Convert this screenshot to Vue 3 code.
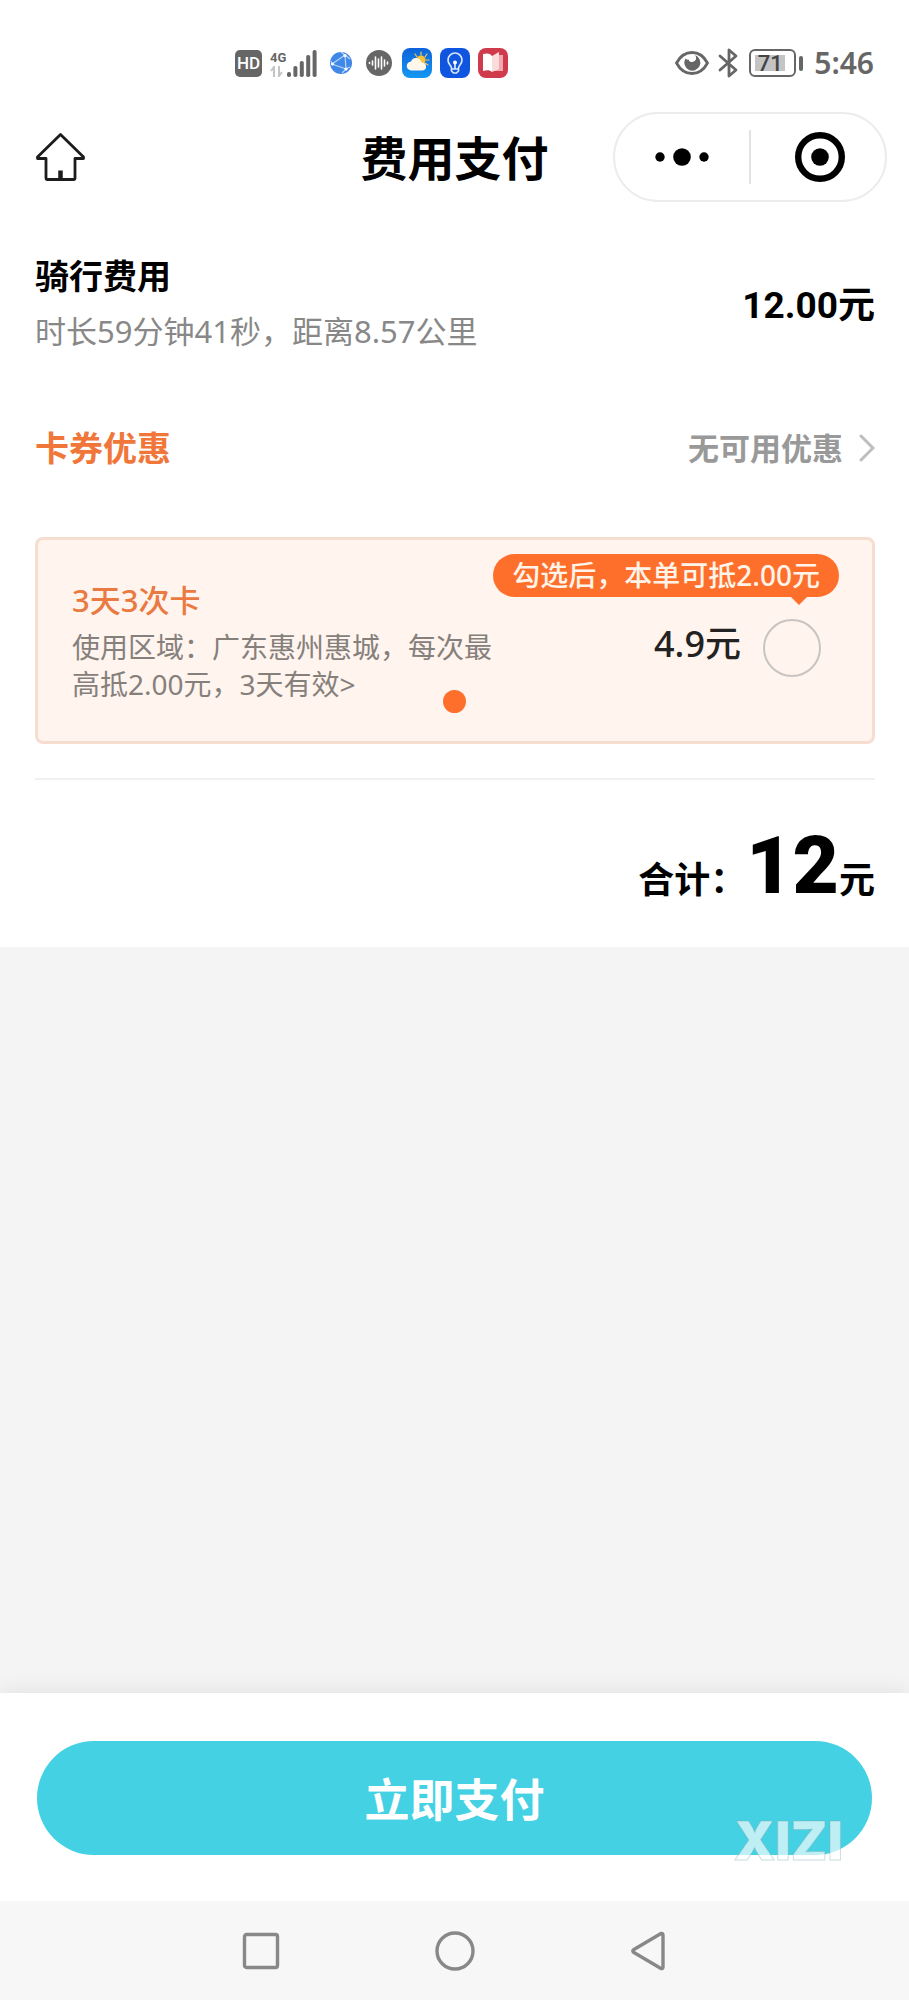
<script setup>
import { ref } from 'vue'

const cardSelected = ref(false)
const bars = [5, 11, 16, 22, 27]
</script>

<template>
  <div class="page">
    <div class="status">
      <div class="status-left">
        <span class="hd">HD</span>
        <span class="signal">
          <span class="net">
            <span class="net-name">4G</span>
            <svg width="13" height="11" viewBox="0 0 13 11" fill="none" stroke="#c4c4c4" stroke-width="2">
              <path d="M4 11V1L1 5M9 0v10l3-4" />
            </svg>
          </span>
          <svg width="30" height="28" viewBox="0 0 30 28" fill="#666">
            <rect v-for="(h, i) in bars" :key="i" :x="i * 6.4" :y="28 - h" width="4" :height="h" rx="1.8" />
          </svg>
        </span>
        <svg class="globe" width="22" height="22" viewBox="0 0 22 22">
          <circle cx="11" cy="11" r="11" fill="#4087e6" />
          <g fill="none" stroke="#b9d6fa" stroke-width="1.2">
            <path d="M2 12 15 3l1 14z" />
            <path d="M15 3l5 4M2 12l-1 -3M16 17l-4 4M15 3l-4-3M16 17l4-2" />
          </g>
          <g fill="#fff"><circle cx="2.5" cy="12" r="1.5" /><circle cx="15" cy="3.5" r="1.6" /><circle cx="16" cy="17" r="1.6" /></g>
        </svg>
        <svg class="wave" width="26" height="26" viewBox="0 0 26 26">
          <circle cx="13" cy="13" r="13" fill="#666" />
          <path d="M3.500 12.500v1M6.500 11v4M9.500 7v12M12.500 9v8M15.500 7v12M18.500 10v6M21.500 12v2" stroke="#fff" stroke-width="1.600" stroke-linecap="round" />
        </svg>
        <svg width="30" height="30" viewBox="0 0 30 30">
          <defs>
            <linearGradient id="sky" x1="0" y1="0" x2="0" y2="1"><stop offset="0" stop-color="#0c62da" /><stop offset="1" stop-color="#1499f4" /></linearGradient>
          </defs>
          <rect width="30" height="30" rx="8" fill="url(#sky)" />
          <path d="M19 4v3M13 6l2 3M25 6l-2 3M24 12h3M23 15l3 2" stroke="#f6c552" stroke-width="1.2" stroke-linecap="round" />
          <circle cx="19" cy="12" r="4.500" fill="#fbc137" />
          <path d="M9.500 22.500a4.500 4.500 0 0 1-.5-9 5.500 5.500 0 0 1 10.500 1 4 4 0 0 1 1 8z" fill="#fff8ea" />
        </svg>
        <svg width="30" height="30" viewBox="0 0 30 30">
          <rect width="30" height="30" rx="8" fill="#0f55e0" />
          <g fill="none" stroke="#d8e6ff" stroke-width="1.7" stroke-linecap="round">
            <path d="M11.500 20c0-2.500-3.500-3.500-3.500-8a7 7 0 0 1 14 0c0 4.500-3.500 5.500-3.500 8v3l-2 2h-3l-2-2z" />
            <path d="M15 15v6M12 21h6" />
          </g>
          <circle cx="15" cy="14.500" r="2" fill="#fff" />
        </svg>
        <svg width="30" height="30" viewBox="0 0 30 30">
          <rect width="30" height="30" rx="8" fill="#cf3a4c" />
          <path d="M17 7h8v16h-9z" fill="#f2a9ae" />
          <path d="M5 6c4-1 7-1 9 2v16c-2-2-5-2-9-1z" fill="#fff" />
          <path d="M14 8l7-4v17l-7 3z" fill="#fbdcdc" />
        </svg>
      </div>
      <div class="status-right">
        <svg width="34" height="24" viewBox="0 0 34 24">
          <path d="M1.500 12C9-2 25-2 32.500 12 25 26 9 26 1.500 12z" fill="none" stroke="#666" stroke-width="2.800" stroke-linejoin="round" />
          <path d="M10.500 7.500a8 8 0 1 0 9.500-3.400c2.500 3.400.5 6.900-3 6.900-1.800 0-3-1-3.500-2.600-1 .6-2 .1-3-.9z" fill="#666" />
        </svg>
        <svg class="bt" width="20" height="30" viewBox="0 0 20 30" fill="none" stroke="#666" stroke-width="2.800" stroke-linejoin="round" stroke-linecap="round">
          <path d="M2 8l16 14-7 6V2l7 6L2 22" />
        </svg>
        <span class="battery"><span class="level">71</span></span>
        <span class="battery-tip"></span>
        <time class="clock">5:46</time>
      </div>
    </div>

    <header class="nav">
      <button class="icon-button home" type="button" aria-label="首页">
        <svg width="49" height="48" viewBox="0 0 49 48" fill="none" stroke="#1c1c1c" stroke-width="2.800" stroke-linejoin="round">
          <path d="M24.500 1.500 47.500 24v1.500H39V45.500q0 1-1 1H11q-1 0-1-1V25.500H1.500V24z" />
          <path d="M24.500 37.500v9" stroke-width="4.500" />
        </svg>
      </button>
      <h1>费用支付</h1>
      <div class="capsule">
        <button class="icon-button" type="button" aria-label="更多">
          <svg width="54" height="18" viewBox="0 0 54 18"><circle cx="5" cy="9" r="4.700" /><circle cx="27" cy="9" r="8.800" /><circle cx="49" cy="9" r="4.700" /></svg>
        </button>
        <span class="split"></span>
        <button class="icon-button" type="button" aria-label="关闭">
          <svg width="50" height="50" viewBox="0 0 50 50"><circle cx="25" cy="25" r="21.800" fill="none" stroke="#000" stroke-width="6.400" /><circle cx="25" cy="25" r="8.800" /></svg>
        </button>
      </div>
    </header>

    <main class="bill">
      <section class="row">
        <div>
          <h2>骑行费用</h2>
          <p class="trip">时长59分钟41秒，距离8.57公里</p>
        </div>
        <strong class="price">12.00元</strong>
      </section>

      <section class="row discount">
        <h2 class="accent">卡券优惠</h2>
        <a class="more" href="#">
          无可用优惠
          <svg width="16" height="28" viewBox="0 0 16 28" fill="none" stroke="#bdbdbd" stroke-width="3" stroke-linecap="round"><path d="M2 2l12 12L2 26" /></svg>
        </a>
      </section>

      <section class="card">
        <div class="card-info">
          <h3>3天3次卡</h3>
          <p>使用区域：广东惠州惠城，每次最高抵2.00元，3天有效&gt;</p>
        </div>
        <label class="pick">
          <span class="pick-price">4.9元</span>
          <input v-model="cardSelected" type="checkbox" aria-label="3天3次卡" />
        </label>
        <span class="tip">勾选后，本单可抵2.00元</span>
        <span class="dot"></span>
      </section>

      <section class="total">
        <span>合计：</span><strong>12</strong><span>元</span>
      </section>
    </main>

    <div class="blank"></div>

    <footer class="pay">
      <button class="pay-button" type="button">立即支付</button>
      <span class="mark">XIZI</span>
    </footer>

    <nav class="system">
      <button class="icon-button" type="button" aria-label="最近任务">
        <svg width="40" height="40" viewBox="0 0 40 40"><rect x="3.500" y="3.500" width="33" height="33" rx="2" /></svg>
      </button>
      <button class="icon-button" type="button" aria-label="主屏幕">
        <svg width="40" height="40" viewBox="0 0 40 40"><circle cx="20" cy="20" r="18" /></svg>
      </button>
      <button class="icon-button" type="button" aria-label="返回">
        <svg width="40" height="40" viewBox="0 0 40 40"><path d="M4.500 18.700 32 2.500q2-.5 2 1.500v32q0 2-2 1.500L4.500 21.300q-1.500-1.300 0-2.600z" /></svg>
      </button>
    </nav>
  </div>
</template>

<style>
body {
  margin: 0;
}
</style>

<style scoped>
.page {
  display: flex;
  flex-direction: column;
  min-height: 100vh;
  background: #fff;
  color: #000;
  font-family: "Noto Sans", "Noto Sans CJK SC", sans-serif;
}
h1, h2, h3, p {
  margin: 0;
}
svg {
  display: block;
  flex: none;
}
button {
  font: inherit;
  border: 0;
  cursor: pointer;
}
.icon-button {
  display: flex;
  padding: 0;
  background: none;
}

.status {
  display: flex;
  justify-content: space-between;
  align-items: center;
  height: 74px;
  padding: 26px 35px 0 235px;
  color: #666;
}
.status-left,
.status-right {
  display: flex;
  align-items: center;
}
.status-left {
  gap: 8px;
}
.hd {
  width: 27px;
  border-radius: 5px;
  background: #666;
  color: #fff;
  font: 500 17px/27px Roboto, sans-serif;
  text-align: center;
}
.signal {
  display: flex;
  align-items: flex-end;
}
.net {
  width: 17px;
}
.net-name {
  display: block;
  font: 700 13px/16px Roboto, sans-serif;
}
.globe {
  margin: 0 6px 0 5px;
}
.wave {
  margin-right: 2px;
}
.bt {
  margin-left: 9px;
}
.battery {
  box-sizing: border-box;
  width: 47px;
  height: 28px;
  margin-left: 11px;
  padding: 4px;
  border: 2px solid #666;
  border-radius: 6px;
}
.level {
  display: block;
  width: 30px;
  height: 16px;
  background: #c4c4c4;
  color: #444;
  font: 500 22px/18px Roboto, sans-serif;
  text-align: center;
}
.battery-tip {
  width: 4px;
  height: 15px;
  margin-left: 3px;
  border-radius: 2px;
  background: #666;
}
.clock {
  margin-left: 11px;
  font: 600 30px/36px "Noto Sans", sans-serif;
}

.nav {
  display: grid;
  grid-template-columns: 1fr auto 1fr;
  align-items: center;
  height: 114px;
  padding: 0 22px;
}
.home {
  margin-left: 14px;
}
h1 {
  padding-top: 2px;
  font-size: 47px;
  line-height: 60px;
  font-weight: 700;
}
.capsule {
  box-sizing: border-box;
  display: flex;
  align-items: center;
  justify-self: end;
  height: 90px;
  padding: 0 40px;
  border: 2px solid #ececec;
  border-radius: 45px;
}
.split {
  width: 2px;
  height: 54px;
  margin: 0 44px 0 40px;
  background: #e2e2e2;
}

.bill {
  padding: 39px 34px 19px 35px;
}
.row {
  display: flex;
  justify-content: space-between;
  align-items: center;
}
h2 {
  font-size: 34px;
  line-height: 46px;
  font-weight: 700;
}
.trip {
  margin-top: 10px;
  color: #888;
  font-size: 31px;
  line-height: 44px;
}
.price {
  padding-top: 6px;
  font-family: Roboto, "Noto Sans CJK SC", sans-serif;
  font-size: 37px;
  line-height: 46px;
}
.discount {
  margin-top: 72px;
}
.accent {
  color: #f0763a;
}
.more {
  display: flex;
  align-items: center;
  gap: 16px;
  color: #999;
  font-size: 31px;
  line-height: 44px;
  font-weight: 700;
  text-decoration: none;
}
.card {
  position: relative;
  box-sizing: border-box;
  display: flex;
  justify-content: space-between;
  align-items: center;
  height: 207px;
  margin-top: 66px;
  padding: 0 51px 0 34px;
  border: 3px solid #f6ddcf;
  border-radius: 8px;
  background: #fff4ee;
}
.card-info {
  max-width: 428px;
}
h3 {
  color: #ea7a42;
  font-size: 31px;
  line-height: 42px;
  font-weight: 500;
}
.card-info p {
  margin-top: 8px;
  color: #85807c;
  font-size: 28px;
  line-height: 37px;
}
.pick {
  display: flex;
  align-items: center;
  gap: 22px;
  margin-top: 14px;
  color: #222;
  font-size: 36px;
  line-height: 46px;
  font-weight: 500;
}
.pick-price {
  padding-bottom: 8px;
}
.pick input {
  appearance: none;
  box-sizing: border-box;
  width: 58px;
  height: 58px;
  margin: 0;
  border: 2px solid #c8c4c2;
  border-radius: 50%;
}
.pick input:checked {
  border: 16px solid #ff6f2c;
}
.tip {
  position: absolute;
  top: 14px;
  right: 33px;
  padding: 0 19px;
  border-radius: 22px;
  background: #ff6f2c;
  color: #fff4ea;
  font-size: 28px;
  line-height: 43px;
  font-weight: 500;
}
.tip::after {
  content: "";
  position: absolute;
  top: 100%;
  right: 32px;
  border: 8px solid transparent;
  border-top-color: #ff6f2c;
  border-bottom: 0;
}
.dot {
  position: absolute;
  bottom: 28px;
  left: 50%;
  width: 23px;
  height: 23px;
  margin-left: -12px;
  border-radius: 50%;
  background: #ff6f2c;
}
.total {
  display: flex;
  justify-content: flex-end;
  align-items: baseline;
  margin-top: 34px;
  padding-top: 38px;
  border-top: 2px solid #f0f0f0;
  font-size: 36px;
  line-height: 96px;
  font-weight: 700;
}
.total strong {
  font-family: Roboto, "Noto Sans", sans-serif;
  font-size: 80px;
}

.blank {
  flex: 1;
  background: #f4f4f4;
}
.pay {
  position: relative;
  padding: 48px 37px 46px;
  background: #fff;
  box-shadow: 0 0 22px rgba(0, 0, 0, 0.09);
}
.pay-button {
  display: block;
  width: 100%;
  height: 114px;
  padding: 4px 0 0;
  border-radius: 57px;
  background: #43d1e3;
  color: #fff;
  font-size: 45px;
  line-height: 60px;
  font-weight: 700;
}
.mark {
  position: absolute;
  right: 66px;
  bottom: 35px;
  color: rgba(255, 255, 255, 0.65);
  font: 900 53px/50px Inter, sans-serif;
  -webkit-text-stroke: 1px rgba(130, 170, 175, 0.4);
  pointer-events: none;
}
.system {
  position: relative;
  display: flex;
  justify-content: center;
  align-items: center;
  gap: 154px;
  height: 99px;
  background: #f7f7f7;
}
.system svg {
  fill: none;
  stroke: #888;
  stroke-width: 3.4;
  stroke-linejoin: round;
}
</style>
